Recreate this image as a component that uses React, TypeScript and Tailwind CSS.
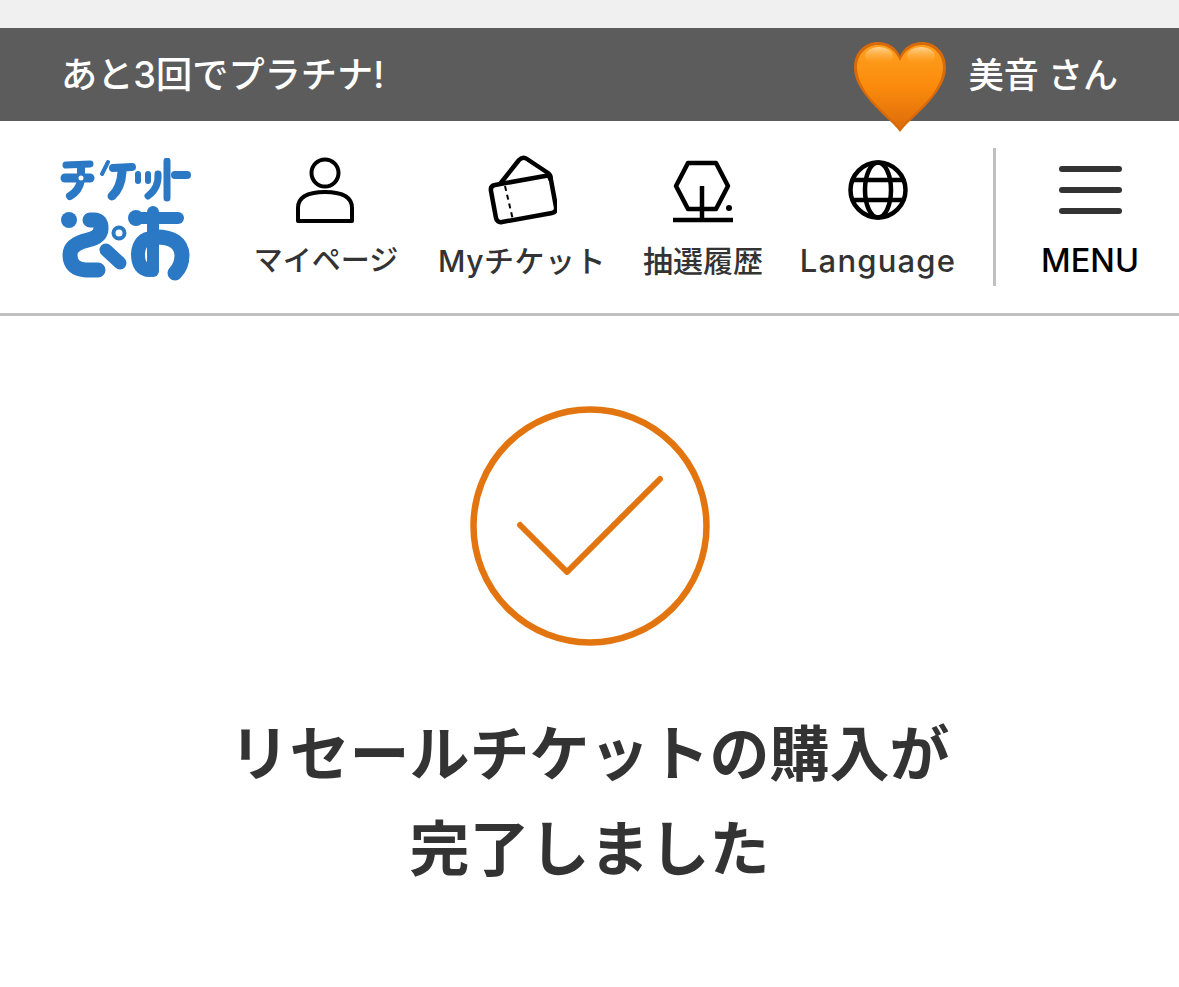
import React from "react";

const jp = { fontFamily: 'Inter, "Noto Sans CJK JP", "Noto Sans", sans-serif' };

function Logo() {
  return (
    <svg width="132" height="124" viewBox="0 0 132 124" fill="none" stroke="#2b78c5" strokeLinecap="round" strokeLinejoin="round">
      {/* チケット */}
      <path d="M6 7 L30 6" strokeWidth="7" />
      <path d="M5 20 H30" strokeWidth="9" />
      <path d="M21 8 V22 Q19 33 10 38" strokeWidth="8" />
      <circle cx="21" cy="20" r="2.5" fill="#ffffff" stroke="none" />
      <path d="M48 4 L42 16" strokeWidth="4" />
      <path d="M53 10 L72 9" strokeWidth="8" />
      <path d="M62 14 Q61 30 52 38" strokeWidth="9" />
      <path d="M78 16 V23" strokeWidth="6" />
      <path d="M88 16 V23" strokeWidth="6" />
      <path d="M98 16 Q99 30 88 38" strokeWidth="7" />
      <path d="M107 3 V40" strokeWidth="7" />
      <path d="M115 17 H127" strokeWidth="8" />
      {/* ぴあ */}
      <circle cx="9" cy="62" r="8" fill="#2b78c5" stroke="none" />
      <path d="M30 62 H34 Q41 62 41 70 Q41 79 28 82 Q10 86 10 97 Q10 111 26 112 H38" strokeWidth="15" />
      <circle cx="59" cy="75" r="5.5" strokeWidth="4" />
      <path d="M46 92 L60 105" strokeWidth="13" />
      <path d="M77 60 H118" strokeWidth="12" />
      <circle cx="76" cy="60" r="8" fill="#2b78c5" stroke="none" />
      <path d="M93 54 V113" strokeWidth="12" />
      <path d="M93 80 Q79 80 78 96 Q78 112 90 112" strokeWidth="14" />
      <path d="M96 79 Q121 79 122 97 Q122 108 115 115" strokeWidth="15" />
    </svg>
  );
}

function UserIcon() {
  return (
    <svg width="62" height="70" viewBox="0 0 62 70" fill="none" stroke="#000" strokeWidth="4">
      <circle cx="30" cy="19" r="13.5" />
      <path d="M3 67 V54 Q3 38 30 38 Q57 38 57 54 V67 Z" strokeLinejoin="round" />
    </svg>
  );
}

function TicketIcon() {
  return (
    <svg width="70" height="70" viewBox="0 0 70 70" fill="none" stroke="#000" strokeWidth="4.5" strokeLinejoin="round" className="mb-[-1px]">
      <path d="M13 29 L32 5 Q36 1 40 4 L61 18 Q65 21 63 26" />
      <path d="M4 36 Q3 31 8 30 L58 21 Q63 20 64 25 L69 52 Q70 57 65 58 L15 67 Q10 68 9 63 Z" />
      <path d="M18 31 L26 65" strokeWidth="2" strokeDasharray="5 4" />
    </svg>
  );
}

function TreeIcon() {
  return (
    <svg width="62" height="64" viewBox="0 0 62 64" fill="none" stroke="#000" strokeWidth="4.5">
      <path d="M16 3 H44 L56 26 L44 49 H16 L4 26 Z" strokeLinejoin="round" />
      <path d="M30 26 V60" />
      <path d="M1 60 H61" />
      <circle cx="57" cy="48" r="3" fill="#000" stroke="none" />
    </svg>
  );
}

function GlobeIcon() {
  return (
    <svg width="60" height="60" viewBox="0 0 60 60" fill="none" stroke="#000" strokeWidth="4.5" className="mb-[4px]">
      <circle cx="30" cy="30" r="27.5" />
      <ellipse cx="30" cy="30" rx="13" ry="27.5" />
      <path d="M4 20 H56 M4 40 H56" />
    </svg>
  );
}

function Heart() {
  return (
    <svg width="94" height="92" viewBox="0 0 94 92">
      <defs>
        <linearGradient id="hg" x1="0" y1="0" x2="0" y2="1">
          <stop offset="0" stopColor="#ffa01e" />
          <stop offset="0.5" stopColor="#fb8a0c" />
          <stop offset="1" stopColor="#dc6c0a" />
        </linearGradient>
        <linearGradient id="hl" x1="0" y1="0" x2="0" y2="1">
          <stop offset="0" stopColor="#ffd9a0" stopOpacity="0.9" />
          <stop offset="1" stopColor="#ffa01e" stopOpacity="0" />
        </linearGradient>
      </defs>
      <path
        d="M47 91 C41 82 25 71 13 55 C4 43 1 35 1 26 C1 11 12 1 25 1 C35 1 43 6 47 15 C51 6 59 1 69 1 C82 1 93 11 93 26 C93 35 90 43 81 55 C69 71 53 82 47 91 Z"
        fill="#d86a0a"
      />
      <path
        d="M47 88 C41 79 27 69 15 54 C7 43 4 34 4 26 C4 13 14 4 25 4 C35 4 43 10 47 20 C51 10 59 4 69 4 C80 4 90 13 90 26 C90 34 87 43 79 54 C67 69 53 79 47 88 Z"
        fill="url(#hg)"
      />
      <ellipse cx="26" cy="15" rx="14" ry="9" fill="url(#hl)" />
      <ellipse cx="68" cy="15" rx="14" ry="9" fill="url(#hl)" />
    </svg>
  );
}

function NavItem({ width, icon, label, labelClass }: { width: string; icon: React.ReactNode; label: string; labelClass: string }) {
  return (
    <div className={`${width} flex flex-col items-center`}>
      <div className="h-[70px] flex items-end justify-center">{icon}</div>
      <div className={`mt-[15px] leading-[44px] font-medium text-[#333333] whitespace-nowrap ${labelClass}`}>{label}</div>
    </div>
  );
}

export default function App() {
  return (
    <div style={jp} className="min-h-[987px] bg-white overflow-hidden">
      <div className="h-[28px] bg-[#f0f0f0]" />
      <div className="h-[93px] bg-[#5c5c5c] flex items-center pl-[61px] pr-[61px] relative z-10">
        <div className="pt-[2px] text-[36.2px] font-medium text-white leading-none">あと3回でプラチナ!</div>
        <div className="ml-auto flex items-center">
          <div className="relative w-[94px] h-[60px]">
            <div className="absolute left-0 top-[-4px]"><Heart /></div>
          </div>
          <div className="pt-[2px] ml-[22px] text-[35px] font-medium text-white leading-none whitespace-nowrap">美音 さん</div>
        </div>
      </div>
      <div className="h-[195px] border-b-[3px] border-[#c0c0c0] flex items-start">
        <div className="w-[228px] pl-[60px] pt-[37px] shrink-0"><Logo /></div>
        <div className="flex pt-[33px]">
          <NavItem width="w-[196px]" icon={<UserIcon />} label="マイページ" labelClass="text-[29px]" />
          <NavItem width="w-[196px]" icon={<TicketIcon />} label="Myチケット" labelClass="text-[30px] tracking-[0.5px]" />
          <NavItem width="w-[166px]" icon={<TreeIcon />} label="抽選履歴" labelClass="text-[30px]" />
          <NavItem width="w-[184px]" icon={<GlobeIcon />} label="Language" labelClass="text-[31px] tracking-[1.2px]" />
        </div>
        <div className="ml-[23px] mt-[27px] w-[3px] h-[138px] bg-[#c0c0c0] shrink-0" />
        <div className="w-[188px] shrink-0 flex flex-col items-center pt-[45px]">
          <div className="flex flex-col gap-[15px]">
            <div className="w-[63px] h-[6px] rounded-full bg-[#333333]" />
            <div className="w-[63px] h-[6px] rounded-full bg-[#333333]" />
            <div className="w-[63px] h-[6px] rounded-full bg-[#333333]" />
          </div>
          <div className="mt-[25px] text-[32.5px] leading-[44px] font-medium text-black">MENU</div>
        </div>
      </div>
      <div className="flex flex-col items-center">
        <svg className="mt-[90px]" width="240" height="240" viewBox="0 0 240 240" fill="none" stroke="#e2750f">
          <circle cx="120" cy="120" r="116.5" strokeWidth="6.5" />
          <path d="M50 119 L97 166 L190 73" strokeWidth="6" strokeLinecap="round" strokeLinejoin="round" />
        </svg>
        <h1 className="mt-[61px] text-center text-[60px] leading-[95px] font-bold text-[#333333]">
          リセールチケットの購入が
          <br />
          完了しました
        </h1>
      </div>
    </div>
  );
}
